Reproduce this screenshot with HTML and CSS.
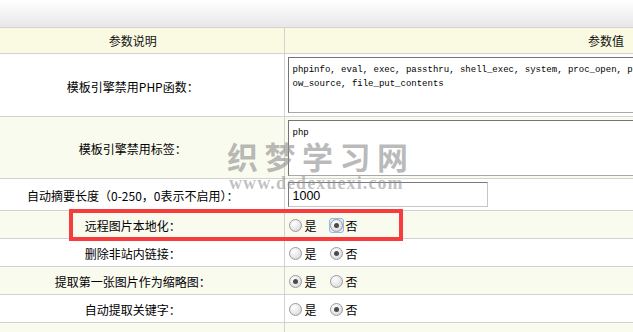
FILE: index.html
```html
<!DOCTYPE html>
<html lang="zh-CN">
<head>
<meta charset="utf-8">
<title>参数设置</title>
<link rel="stylesheet" href="styles.css">
</head>
<body>
<div class="topbar"></div>
<table class="params">
  <colgroup><col class="c-lbl"><col class="c-val"></colgroup>
  <tr class="head"><th class="lbl">参数说明</th><th class="val">参数值</th></tr>
  <tr class="r-ta odd"><td class="lbl">模板引擎禁用PHP函数：</td><td class="val"><textarea class="ta" wrap="off" readonly>phpinfo, eval, exec, passthru, shell_exec, system, proc_open, popen, curl_exec, curl_multi_exec, parse_ini_file, sh
ow_source, file_put_contents</textarea></td></tr>
  <tr class="r-ta2 even"><td class="lbl">模板引擎禁用标签：</td><td class="val"><textarea class="ta" wrap="off" readonly>php</textarea></td></tr>
  <tr class="r-in odd"><td class="lbl">自动摘要长度（0-250，0表示不启用）：</td><td class="val"><input class="txt" type="text" value="1000" readonly></td></tr>
  <tr class="r-rd even"><td class="lbl">远程图片本地化：</td><td class="val"><span class="opt"><span class="radio"></span>是</span><span class="opt"><span class="focus"><span class="radio on"></span></span>否</span></td></tr>
  <tr class="r-rd odd"><td class="lbl">删除非站内链接：</td><td class="val"><span class="opt"><span class="radio"></span>是</span><span class="opt"><span class="radio on"></span>否</span></td></tr>
  <tr class="r-rd even"><td class="lbl">提取第一张图片作为缩略图：</td><td class="val"><span class="opt"><span class="radio on"></span>是</span><span class="opt"><span class="radio"></span>否</span></td></tr>
  <tr class="r-rd odd"><td class="lbl">自动提取关键字：</td><td class="val"><span class="opt"><span class="radio"></span>是</span><span class="opt"><span class="radio on"></span>否</span></td></tr>
  <tr class="r-last even"><td class="lbl last-lbl">文档标题最大长度<br>（字节）：</td><td class="val last-val"><input class="txt" type="text" value="60" readonly></td></tr>
</table>
<div class="watermark">
  <div class="wm-cn">织梦学习网</div>
  <div class="wm-en">www.dedexuexi.com</div>
</div>
<div class="highlight"></div>
</body>
</html>
```

FILE: styles.css
```css
html, body {
  margin: 0;
  padding: 0;
  overflow: hidden;
  background: #fff;
}
body {
  width: 633px;
  height: 332px;
  position: relative;
  font-family: "Noto Sans CJK SC", "Liberation Sans", sans-serif;
  font-size: 12px;
  color: #000;
}
.topbar {
  height: 27px;
  background: linear-gradient(#ffffff, #e7e7e7);
}
.params {
  border-collapse: collapse;
  table-layout: fixed;
  width: 928px;
}
.c-lbl { width: 284px; }
.c-val { width: 644px; }
.params th, .params td {
  border: 1px solid #d2d2d2;
  padding: 0;
  vertical-align: middle;
}
.params tr > :first-child { border-left: none; }
.params th {
  font-weight: normal;
  text-align: center;
  color: #111;
}
.head { height: 26px; background: #fafae2; }
.head th.lbl { padding-right: 18px; }
.odd { background: #ffffff; }
.even { background: #f9fbef; }
.r-ta { height: 63px; }
.r-ta2 { height: 62px; }
.r-in { height: 32px; }
.r-rd { height: 28px; }
.r-last { height: 44px; }
td.lbl {
  text-align: center;
  padding-right: 18px;
  padding-top: 3px;
  line-height: 16px;
}
td.val {
  padding-left: 3px;
}
.last-lbl { vertical-align: top; padding-top: 1px; }
.last-val { vertical-align: top; padding-top: 8px; }
.ta {
  display: block;
  box-sizing: border-box;
  width: 620px;
  height: 56px;
  margin: 0;
  padding: 5px 4px;
  border: 1px solid #a8a8a8;
  border-top-color: #747474;
  border-left-color: #747474;
  background: #fff;
  font-family: "Liberation Mono", monospace;
  font-size: 9px;
  line-height: 14px;
  color: #000;
  resize: none;
  overflow: hidden;
  white-space: pre;
  outline: none;
}
.txt {
  display: block;
  box-sizing: border-box;
  width: 200px;
  height: 25px;
  margin: 0;
  padding: 2px 4px 0;
  border: 1px solid #c6c6c6;
  border-top-color: #7a7a7a;
  border-left-color: #7a7a7a;
  background: #fff;
  font-family: "Liberation Sans", sans-serif;
  font-size: 12.5px;
  color: #000;
  outline: none;
}
.opt {
  display: inline-flex;
  align-items: center;
  gap: 3px;
  margin-right: 12px;
  line-height: 16px;
  vertical-align: middle;
  padding-left: 1px;
}
.radio {
  display: inline-block;
  box-sizing: border-box;
  width: 13px;
  height: 13px;
  border-radius: 50%;
  border: 1px solid #9b9b9b;
  background: radial-gradient(circle at 35% 30%, #ffffff 0%, #ececec 45%, #cfcfcf 100%);
  position: relative;
}
.radio.on::after {
  content: "";
  position: absolute;
  left: 3px;
  top: 3px;
  width: 5px;
  height: 5px;
  border-radius: 50%;
  background: #4a4a4a;
}
.focus {
  display: inline-flex;
  margin: -1px;
  border: 1px solid #8fbaea;
  border-radius: 3px;
  background: #e2eefb;
}
.watermark {
  position: absolute;
  left: 227px;
  top: 138px;
  pointer-events: none;
}
.wm-cn {
  font-family: "Noto Sans CJK SC", sans-serif;
  font-weight: bold;
  font-size: 31px;
  line-height: 36px;
  letter-spacing: 6.5px;
  color: rgba(140, 140, 140, 0.6);
}
.wm-en {
  margin-left: 2px;
  font-family: "Liberation Serif", serif;
  font-weight: bold;
  font-size: 18px;
  line-height: 18px;
  letter-spacing: 1.1px;
  color: rgba(140, 140, 140, 0.55);
}
.highlight {
  position: absolute;
  left: 69px;
  top: 209px;
  width: 334px;
  height: 32px;
  box-sizing: border-box;
  border: 4px solid #f63c3c;
  pointer-events: none;
}
```
